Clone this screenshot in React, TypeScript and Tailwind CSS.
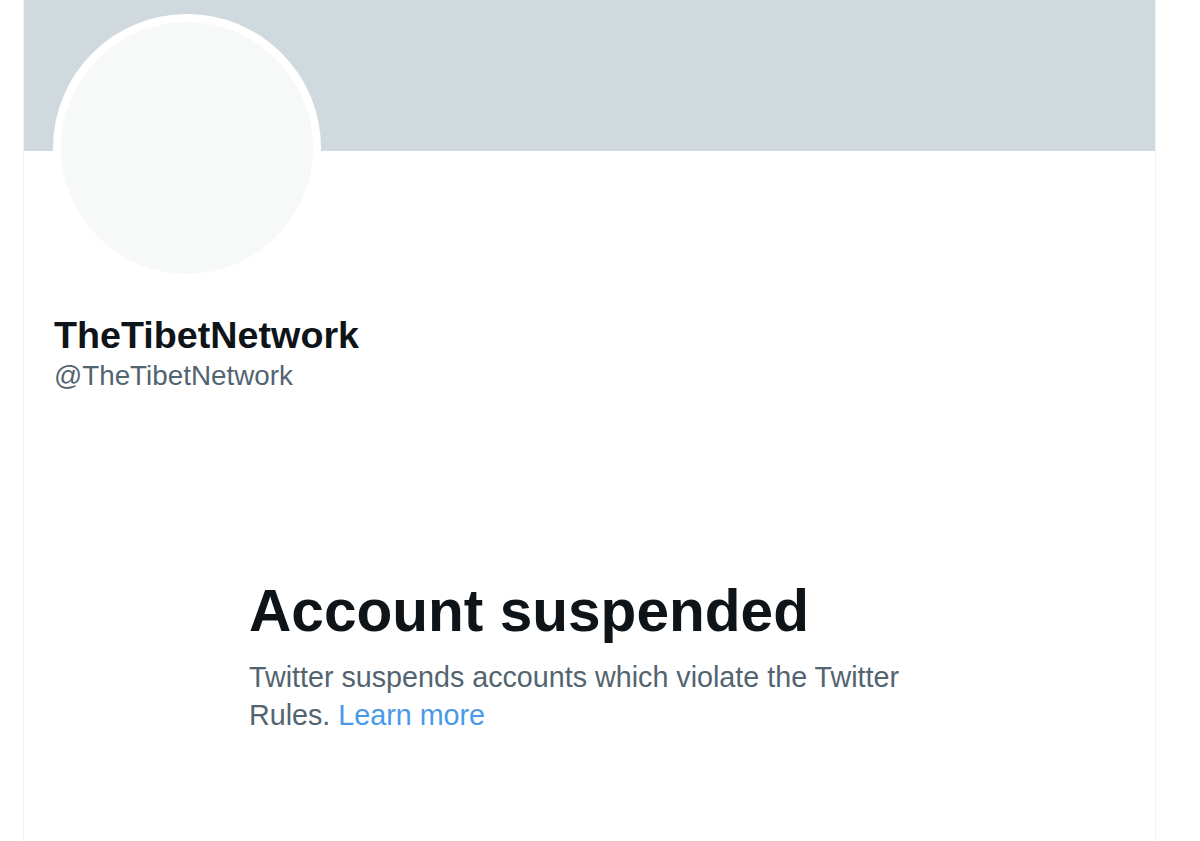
import React from "react";

const font = { fontFamily: '"Liberation Sans", Arial, sans-serif' };

const App = () => {
  return (
    <div className="min-h-[841px] w-full bg-white" style={font}>
      <div className="ml-[23px] h-[841px] w-[1133px] overflow-hidden border-x border-[#eff3f4]">
        {/* banner */}
        <div className="h-[151px] bg-[#cfd9de]"></div>

        {/* avatar */}
        <div className="-mt-[137px] pl-[29px]">
          <div className="h-[268px] w-[268px] rounded-full bg-white p-[8px]">
            <div className="h-full w-full rounded-full bg-[#f7f9f9]"></div>
          </div>
        </div>

        {/* name */}
        <div className="mt-[31px] pl-[30px]">
          <div className="text-[37.7px] font-bold leading-[44px] text-[#0f1419]">
            TheTibetNetwork
          </div>
          <div className="text-[27.8px] leading-[38px] text-[#536471]">
            @TheTibetNetwork
          </div>
        </div>

        {/* suspended notice */}
        <div className="mt-[181px] pl-[225px]">
          <h1 className="text-[58.6px] font-bold leading-[70px] text-[#0f1419]">
            Account suspended
          </h1>
          <p className="mt-[12px] w-[670px] text-[28.7px] leading-[38px] text-[#536471]">
            Twitter suspends accounts which violate the Twitter Rules.{" "}
            <a href="#" className="text-[#4a99e9]">
              Learn more
            </a>
          </p>
        </div>
      </div>
    </div>
  );
};

export default App;
